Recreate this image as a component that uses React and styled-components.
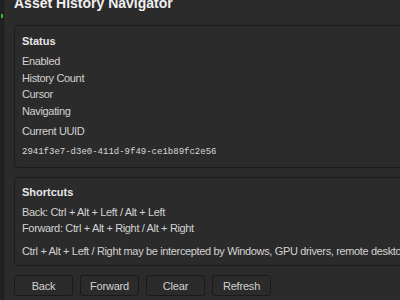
import styled, { createGlobalStyle } from "styled-components";

const Global = createGlobalStyle`
  html, body {
    margin: 0;
    padding: 0;
    background: #2b2b2b;
    overflow: hidden;
  }
`;

const Shell = styled.div`
  display: flex;
  align-items: flex-start;
  width: 400px;
  height: 300px;
  overflow: hidden;
  background: #2b2b2b;
  font-family: "Liberation Sans", Arial, sans-serif;
  color: #d2d2d2;
`;

const Gutter = styled.div`
  position: relative;
  flex: 0 0 3px;
  align-self: stretch;
  background: #222;
  border-right: 1px solid #1b1b1b;
`;

const Marker = styled.span`
  position: absolute;
  left: 1px;
  top: 14px;
  width: 2px;
  height: 4px;
  background: #3fae3f;
`;

const Panel = styled.div`
  flex: 0 0 520px;
  padding: 0 0 0 10px;
  display: flex;
  flex-direction: column;
`;

const Title = styled.h1`
  flex-shrink: 0;
  margin: -6px 0 0;
  height: 31px;
  font-size: 14px;
  font-weight: bold;
  color: #f0f0f0;
  line-height: 18px;
`;

const Section = styled.section`
  flex-shrink: 0;
  border: 1px solid #1c1c1c;
  border-radius: 4px;
  padding: ${(p) => p.$pad || "9px 7px 9px"};
  margin-bottom: 9px;
  display: flex;
  flex-direction: column;
`;

const SectionTitle = styled.h2`
  margin: 0 0 5px;
  font-size: 11px;
  font-weight: bold;
  color: #e6e6e6;
  line-height: 13px;
`;

const Line = styled.div`
  font-size: 11px;
  letter-spacing: -0.35px;
  line-height: 16.5px;
  margin-top: ${(p) => p.$gap || 0}px;
`;

const Uuid = styled.div`
  margin-top: 6px;
  font-family: "Liberation Mono", "DejaVu Sans Mono", monospace;
  font-size: 9px;
  line-height: 12px;
  color: #d8d8d8;
`;

const Buttons = styled.div`
  flex-shrink: 0;
  display: flex;
  gap: 7px;
`;

const Button = styled.button`
  width: 59px;
  height: 21px;
  background: #2b2b2b;
  border: 1px solid #1a1a1a;
  border-radius: 3px;
  color: #d2d2d2;
  font-family: "Liberation Sans", Arial, sans-serif;
  font-size: 11px;
  letter-spacing: -0.2px;
  padding: 0;
`;

export default function App() {
  return (
    <>
      <Global />
      <Shell>
        <Gutter>
          <Marker />
        </Gutter>
        <Panel>
          <Title>Asset History Navigator</Title>
          <Section>
            <SectionTitle>Status</SectionTitle>
            <Line>Enabled</Line>
            <Line>History Count</Line>
            <Line>Cursor</Line>
            <Line>Navigating</Line>
            <Line $gap={4}>Current UUID</Line>
            <Uuid>2941f3e7-d3e0-411d-9f49-ce1b89fc2e56</Uuid>
          </Section>
          <Section $pad="8px 7px 6px">
            <SectionTitle>Shortcuts</SectionTitle>
            <Line>Back: Ctrl + Alt + Left / Alt + Left</Line>
            <Line>Forward: Ctrl + Alt + Right / Alt + Right</Line>
            <Line $gap={6}>
              Ctrl + Alt + Left / Right may be intercepted by Windows, GPU
              drivers, remote desktop tools.
            </Line>
          </Section>
          <Buttons>
            <Button>Back</Button>
            <Button>Forward</Button>
            <Button>Clear</Button>
            <Button>Refresh</Button>
          </Buttons>
        </Panel>
      </Shell>
    </>
  );
}
